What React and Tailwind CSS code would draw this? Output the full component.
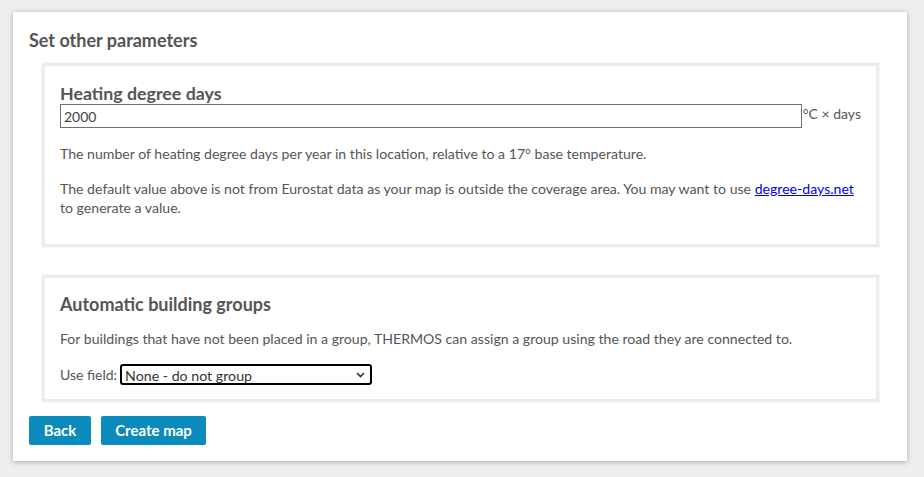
export default function App() {
  const font = { fontFamily: '"Lato", "Noto Sans", sans-serif' };
  return (
    <div className="min-h-[477px] w-[924px] bg-[#eeeeee] pt-3 pl-[13px] pr-[17px] text-[#555555]" style={font}>
      <div className="bg-white shadow-[0_1px_5px_rgba(0,0,0,0.3)] px-4 pt-[17px] pb-4">
        <h2 className="text-[18px] leading-[22px] font-bold text-[#555555]">Set other parameters</h2>
        <div className="mt-3 ml-[13px] mr-[12px] border-[3px] border-[#ececec] shadow-[0_0_1px_rgba(0,0,0,0.2)] pl-[15px] pr-[15px] pt-4 pb-[27px]">
          <h3 className="text-[17.8px] leading-[22px] font-bold text-[#555555]">Heating degree days</h3>
          <div className="flex items-start">
            <input
              type="text"
              defaultValue="2000"
              className="h-6 flex-1 border border-[#6f6f6f] px-[3px] text-[14px] text-[#444] outline-none"
              style={font}
            />
            <span className="text-[14px] leading-[20px] ml-[1px]">°C × days</span>
          </div>
          <p className="mt-4 text-[14.1px] leading-[19px]">
            The number of heating degree days per year in this location, relative to a 17° base temperature.
          </p>
          <p className="mt-4 text-[14.1px] leading-[19px]">
            The default value above is not from Eurostat data as your map is outside the coverage area. You may want to use{' '}
            <a href="#" className="text-[#0000ee] underline">degree-days.net</a>
            <br />
            to generate a value.
          </p>
        </div>
        <div className="mt-[28px] ml-[13px] mr-[12px] border-[3px] border-[#ececec] shadow-[0_0_1px_rgba(0,0,0,0.2)] pl-[15px] pr-[15px] pt-[15px] pb-[14px]">
          <h3 className="text-[18px] leading-[22px] font-bold text-[#555555]">Automatic building groups</h3>
          <p className="mt-[14px] text-[14.1px] leading-[19px]">
            For buildings that have not been placed in a group, THERMOS can assign a group using the road they are connected to.
          </p>
          <div className="mt-4 flex items-center text-[14px]">
            <span className="mr-[3px]">Use field:</span>
            <div
              className="relative w-[252px] h-[21px] border-2 border-black rounded-[3px] flex items-center pl-[3px] text-[#333]"
              style={font}
            >
              <span className="text-[14.2px] leading-[17px] pt-[1px]" style={font}>None - do not group</span>
              <svg className="absolute right-[5px] top-[6px]" width="9" height="6" viewBox="0 0 9 6">
                <path d="M1 1 L4.5 4.5 L8 1" stroke="#333" strokeWidth="1.6" fill="none" />
              </svg>
            </div>
          </div>
        </div>
        <div className="mt-[14px] flex gap-[10px]">
          <button className="h-[29px] w-[62px] rounded-[2px] bg-[#0a8bbb] text-white font-bold text-[15px]">Back</button>
          <button className="h-[29px] w-[105px] rounded-[2px] bg-[#0a8bbb] text-white font-bold text-[15px]">Create map</button>
        </div>
      </div>
    </div>
  );
}
